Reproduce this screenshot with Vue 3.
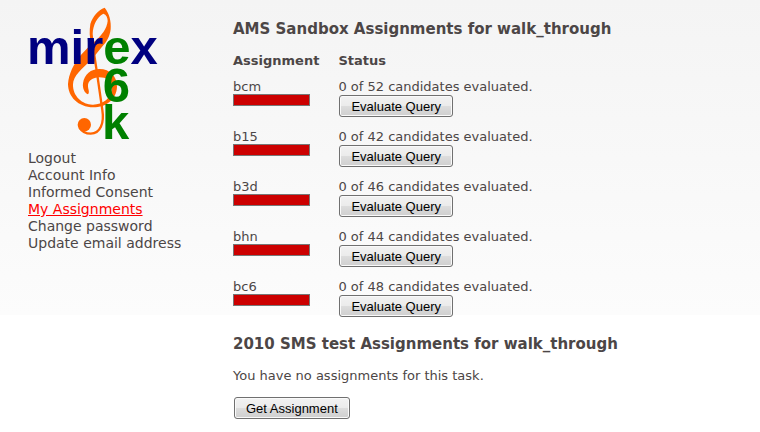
<template>
  <div class="page">
    <!-- Sidebar -->
    <aside class="sidebar">
      <svg class="logo" viewBox="24 0 396 426" role="img" aria-label="mirex e6k">
        <g fill="#ff6600">
          <path
            fill-rule="evenodd"
            d="M254 23 C268 40 274 65 272 88 C269 110 261 124 248 138 L214 180 C184 207 160 228 159 253 C158 290 188 314 217 314 C246 315 275 297 276 262 C276 240 258 232 238 232 C218 232 203 244 204 258 C204 268 210 276 204 283 C194 280 187 266 189 250 C193 222 213 207 238 207 C270 207 292 230 291 260 C290 298 258 322 220 322 C174 321 144 290 144 252 C146 222 160 194 182 166 L214 132 C208 112 208 92 211 72 C218 50 234 30 254 23 Z M250 41 C230 52 219 76 218 102 L221 127 C244 108 261 86 263 63 C263 53 259 44 250 41 Z"
          />
          <circle cx="193" cy="374" r="20" />
        </g>
        <path
          fill="none"
          stroke="#ff6600"
          stroke-width="7"
          d="M216 120 L230 212 L247 330 C253 368 242 401 212 401 C196 401 184 392 178 382"
        />
        <g class="logo-text">
          <text x="21" y="192" fill="#000080">
            mir<tspan fill="#008000">e</tspan>x
          </text>
          <text x="248" y="305" fill="#008000">6</text>
          <text x="246" y="416" fill="#008000">k</text>
        </g>
      </svg>
      <nav>
        <ul class="menu">
          <li v-for="link in links" :key="link">
            <a
              href="#"
              :class="{ active: link === current }"
              @click.prevent="current = link"
            >{{ link }}</a>
          </li>
        </ul>
      </nav>
    </aside>

    <!-- Main content -->
    <main class="content">
      <h3>AMS Sandbox Assignments for {{ user }}</h3>
      <table>
        <thead>
          <tr>
            <th>Assignment</th>
            <th>Status</th>
          </tr>
        </thead>
        <tbody>
          <tr v-for="item in assignments" :key="item.id">
            <td>
              {{ item.id }}
              <div class="bar">
                <div class="bar-done" :style="{ width: (item.done / item.total) * 100 + '%' }"></div>
              </div>
            </td>
            <td>
              {{ item.done }} of {{ item.total }} candidates evaluated.
              <button type="button">Evaluate Query</button>
            </td>
          </tr>
        </tbody>
      </table>

      <h3>2010 SMS test Assignments for {{ user }}</h3>
      <p>You have no assignments for this task.</p>
      <button type="button">Get Assignment</button>
    </main>
  </div>
</template>

<script setup>
import { ref } from 'vue';

const user = 'walk_through';

const links = [
  'Logout',
  'Account Info',
  'Informed Consent',
  'My Assignments',
  'Change password',
  'Update email address',
];
const current = ref('My Assignments');

const assignments = ref([
  { id: 'bcm', done: 0, total: 52 },
  { id: 'b15', done: 0, total: 42 },
  { id: 'b3d', done: 0, total: 46 },
  { id: 'bhn', done: 0, total: 44 },
  { id: 'bc6', done: 0, total: 48 },
]);
</script>

<style>
body {
  margin: 0;
  background: #fff;
}
</style>

<style scoped>
.page {
  display: flex;
  gap: 28px;
  min-height: 100vh;
  box-sizing: border-box;
  padding: 0 28px;
  background: linear-gradient(#f4f4f4, #fcfcfc) no-repeat 0 0 / 100% 315px;
  color: #4c4646;
  font-family: Verdana, "DejaVu Sans", sans-serif;
  font-size: 13px;
  line-height: 16px;
}

.sidebar {
  flex: 0 0 177px;
}

.logo {
  display: block;
  width: 132px;
  height: 142px;
  margin-bottom: 8px;
  overflow: visible;
}

.logo-text {
  font-family: Arial, "Liberation Sans", sans-serif;
  font-size: 147px;
  font-weight: bold;
}

.menu {
  list-style: none;
  margin: 0;
  padding: 0;
  font-size: 14px;
  line-height: 17px;
}

.menu a {
  color: #4c4646;
  text-decoration: none;
}

.menu a.active,
.menu a:hover {
  color: #f00;
  text-decoration: underline;
}

.content {
  flex: 1;
  padding-top: 20px;
}

h3 {
  margin: 0 0 15px;
  font-size: 15px;
  line-height: 18px;
}

table {
  border-collapse: collapse;
  margin-bottom: 6px;
}

th,
td {
  padding: 0 19px 10px 0;
  text-align: left;
  vertical-align: top;
}

td {
  line-height: 15px;
}

.bar {
  box-sizing: border-box;
  width: 77px;
  height: 12px;
  border: 1px solid #777;
  background: #c00;
}

.bar-done {
  height: 100%;
  background: #0a0;
}

p {
  margin: 0 0 13px;
}

button {
  display: block;
  height: 22px;
  margin: 0 1px;
  padding: 0 11px;
  border: 1px solid #707070;
  border-radius: 3px;
  background: linear-gradient(#f2f2f2, #ebebeb 50%, #dddddd 50%, #cfcfcf);
  box-shadow: inset 0 0 0 1px #fafafa;
  color: #000;
  font-family: Arial, "Liberation Sans", sans-serif;
  font-size: 13px;
}

td button {
  margin: 1px 1px 2px;
}
</style>
